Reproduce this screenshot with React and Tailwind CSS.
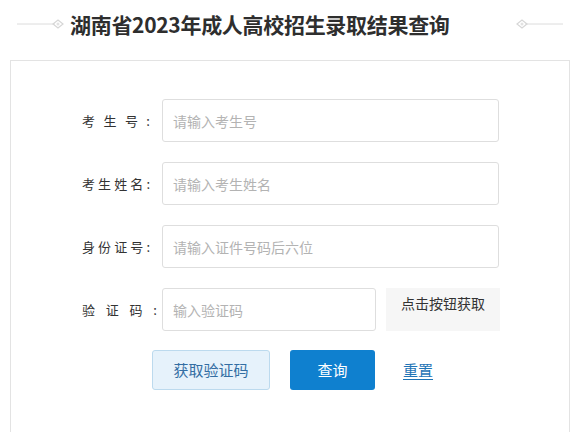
import React from 'react';

const font = { fontFamily: '"Noto Sans CJK SC", "Noto Sans", sans-serif' };

function Ornament({ flip }) {
  return (
    <svg width="48" height="12" viewBox="0 0 48 12" className={flip ? 'scale-x-[-1] shrink-0' : 'shrink-0'}>
      <line x1="0" y1="6" x2="38" y2="6" stroke="#dcdcdc" strokeWidth="1" />
      <path d="M36 6 L41 2 L46 6 L41 10 Z" fill="none" stroke="#d6d6d6" strokeWidth="1.2" />
      <circle cx="41" cy="6" r="1.5" fill="#e2e2e2" />
    </svg>
  );
}

function Label({ chars, width }) {
  return (
    <div className={`flex justify-between text-[13px] text-[#333] ${width}`}>
      {chars.map((c, i) => (
        <span key={i}>{c}</span>
      ))}
    </div>
  );
}

function Row({ chars, width, placeholder, narrow, children }) {
  return (
    <div className="flex items-center h-[43px]">
      <div className="w-[151px] flex justify-end pr-[5px]">
        <div className="flex-1 pl-[71px]">
          <Label chars={chars} width={width} />
        </div>
      </div>
      <input
        placeholder={placeholder}
        className={`h-[43px] ${narrow ? 'w-[214px]' : 'w-[337px]'} border border-[#dedede] rounded-[3px] bg-white px-[10px] text-[14px] text-[#333] placeholder:text-[#b3b3b3] outline-none`}
        style={font}
      />
      {children}
    </div>
  );
}

export default function App() {
  return (
    <div className="w-[586px] h-[432px] bg-white overflow-hidden" style={font}>
      <div className="flex items-center h-[48px] pl-[17px]">
        <Ornament />
        <h1 className="ml-[5px] shrink-0 whitespace-nowrap text-[21px] tracking-[-0.3px] font-bold text-[#2e2e2e] leading-none">
          湖南省2023年成人高校招生录取结果查询
        </h1>
        <div className="ml-[65px] shrink-0">
          <Ornament flip />
        </div>
      </div>

      <div className="ml-[10px] mt-[12px] w-[560px] h-[400px] border border-b-0 border-[#e3e3e3] pt-[38px]">
        <div className="flex flex-col gap-[20px]">
          <Row chars={['考', '生', '号', ':']} width="w-[68px]" placeholder="请输入考生号" />
          <Row chars={['考', '生', '姓', '名', ':']} width="w-[68px]" placeholder="请输入考生姓名" />
          <Row chars={['身', '份', '证', '号', ':']} width="w-[68px]" placeholder="请输入证件号码后六位" />
          <Row chars={['验', '证', '码', ':']} width="w-[75px]" placeholder="输入验证码" narrow>
            <div className="ml-[10px] w-[114px] h-[43px] bg-[#f6f6f6] text-center text-[14px] text-[#333] leading-[20px] pt-[5px]">
              点击按钮获取
            </div>
          </Row>
        </div>

        <div className="flex items-center mt-[19px] pl-[141px]">
          <button className="w-[118px] h-[40px] rounded-[3px] bg-[#e6f2fb] border border-[#bcdaee] text-[15px] text-[#336ea3]">
            获取验证码
          </button>
          <button className="ml-[20px] w-[85px] h-[40px] rounded-[3px] bg-[#0f80cf] text-[15px] text-white">
            查询
          </button>
          <a className="ml-[28px] text-[15px] text-[#1f74b6] underline underline-offset-[3px]">重置</a>
        </div>
      </div>
    </div>
  );
}
